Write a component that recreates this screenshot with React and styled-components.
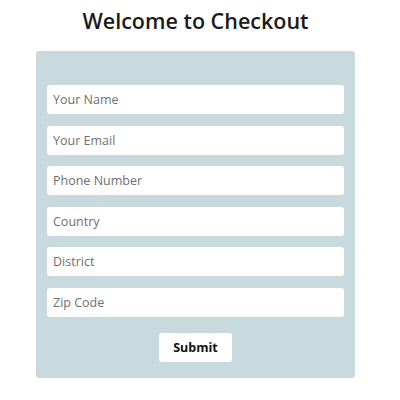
import React from 'react';
import styled, { createGlobalStyle } from 'styled-components';

const GlobalStyle = createGlobalStyle`
  body {
    margin: 0;
    background: #ffffff;
    font-family: "Open Sans", "Noto Sans", sans-serif;
  }
`;

const Page = styled.div`
  display: flex;
  flex-direction: column;
  align-items: center;
  padding: 6px 9px 0 0;
`;

const Title = styled.h1`
  margin: 0 0 15px;
  font-size: 21.5px;
  font-weight: 600;
  color: #1a1a1a;
  line-height: 30px;
`;

const Card = styled.form`
  width: 319px;
  box-sizing: border-box;
  background: #c9dadf;
  border-radius: 3px;
  padding: 34px 11px 16px;
  display: flex;
  flex-direction: column;
  gap: 11.5px;
`;

const Field = styled.input`
  height: 29px;
  box-sizing: border-box;
  border: none;
  border-radius: 3px;
  background: #ffffff;
  padding: 0 6px;
  font-family: "Open Sans", "Noto Sans", sans-serif;
  font-size: 12.5px;
  color: #333;
  outline: none;

  &::placeholder {
    color: #6f6f6f;
  }
`;

const Submit = styled.button`
  align-self: center;
  margin-top: 5px;
  width: 73px;
  height: 29px;
  border: none;
  border-radius: 3px;
  background: #ffffff;
  font-family: "Open Sans", "Noto Sans", sans-serif;
  font-size: 12.5px;
  font-weight: 700;
  color: #111;
  cursor: pointer;
`;

const fields = ['Your Name', 'Your Email', 'Phone Number', 'Country', 'District', 'Zip Code'];

export default function App() {
  return (
    <>
      <GlobalStyle />
      <Page>
        <Title>Welcome to Checkout</Title>
        <Card onSubmit={(e) => e.preventDefault()}>
          {fields.map((f) => (
            <Field key={f} placeholder={f} />
          ))}
          <Submit type="submit">Submit</Submit>
        </Card>
      </Page>
    </>
  );
}
